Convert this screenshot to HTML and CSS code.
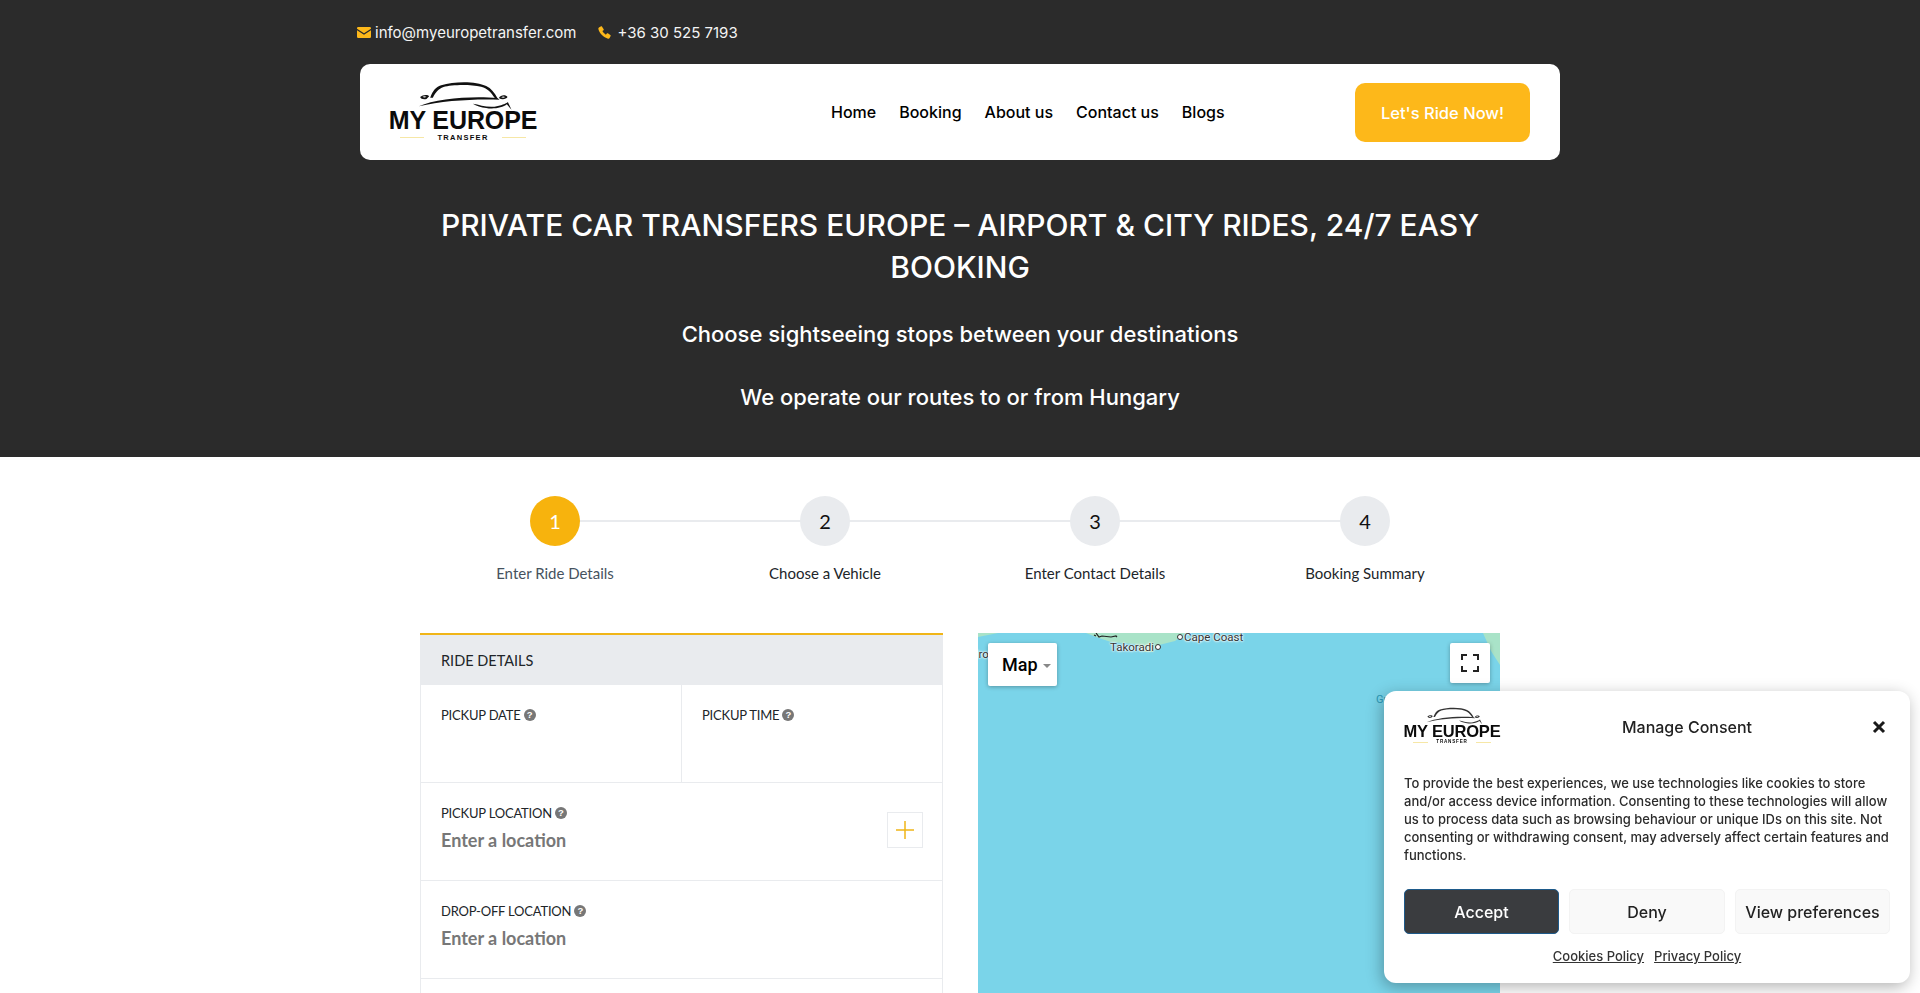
FILE: index.html
```html
<!DOCTYPE html>
<html lang="en">
<head>
<meta charset="utf-8">
<title>My Europe Transfer</title>
<link rel="stylesheet" href="styles.css">
</head>
<body>
<svg class="defs" width="0" height="0" aria-hidden="true">
  <symbol id="car" viewBox="110 20 290 90">
    <path d="M152 70C160 50 168 38 185 33C225 20 290 20 320 35C335 42 345 55 354 72L346 71C335 55 325 42 305 37C270 29 215 31 192 38C177 43 168 55 160 70Z"/>
    <path d="M118 96C170 72 280 64 354 71L360 76C290 73 190 78 118 96Z"/>
    <path d="M122 68C130 60 146 60 149 66L141 74C132 76 124 74 122 68ZM129 67C133 70 137 70 141 67C137 65 132 65 129 67Z" fill-rule="evenodd"/>
    <path d="M358 71C364 60 380 61 384 68C380 75 367 77 358 71ZM365 69C369 71 374 71 377 68C373 65 368 66 365 69Z" fill-rule="evenodd"/>
    <path d="M280 88C300 91 322 100 345 97C364 94 380 88 385 83L396 106L382 90C370 101 340 105 320 101C305 99 290 95 280 88Z"/>
  </symbol>
</svg>

<header class="hero">
  <div class="contact">
    <a class="contact-item">
      <svg class="ico-mail" viewBox="0 0 14 11"><path d="M1.2 0h11.6A1.2 1.2 0 0 1 14 1.2v.5L7 6.2 0 1.700v-.5A1.200 1.200 0 0 1 1.200 0Z"/><path d="M0 3.300 7 7.800l7-4.500v6.500a1.200 1.200 0 0 1-1.200 1.200H1.200A1.200 1.200 0 0 1 0 9.800Z"/></svg>
      info@myeuropetransfer.com
    </a>
    <a class="contact-item contact-phone">
      <svg class="ico-phone" viewBox="0 0 14 14"><path d="M3.300.4 1 1.500C.4 1.900.2 2.500.4 3.200 1.600 8 6 12.400 10.800 13.600c.7.200 1.300 0 1.700-.6l1.100-2.300c.2-.4.100-.8-.3-1.100l-2.700-1.700c-.4-.2-.8-.2-1.100.1L8.500 9.300C6.900 8.500 5.500 7.100 4.700 5.500l1.300-1c.3-.3.3-.7.100-1.100L4.400.7C4.100.3 3.700.2 3.300.4Z"/></svg>
      +36 30 525 7193
    </a>
  </div>

  <nav class="navbar">
    <div class="logo logo-lg">
      <svg class="logo-car"><use href="#car"/></svg>
      <div class="logo-name">MY EUROPE</div>
      <div class="logo-sub"><i></i><span>TRANSFER</span><i></i></div>
    </div>
    <ul class="menu">
      <li>Home</li>
      <li>Booking</li>
      <li>About us</li>
      <li>Contact us</li>
      <li>Blogs</li>
    </ul>
    <a class="cta">Let's Ride Now!</a>
  </nav>

  <h1 class="title">PRIVATE CAR TRANSFERS EUROPE – AIRPORT &amp; CITY RIDES, 24/7 EASY BOOKING</h1>
  <p class="tagline">Choose sightseeing stops between your destinations</p>
  <p class="tagline tagline-second">We operate our routes to or from Hungary</p>
</header>

<main class="content">
  <ol class="steps">
    <li class="step step-active"><span class="step-num">1</span><span class="step-label">Enter Ride Details</span></li>
    <li class="step"><span class="step-num">2</span><span class="step-label">Choose a Vehicle</span></li>
    <li class="step"><span class="step-num">3</span><span class="step-label">Enter Contact Details</span></li>
    <li class="step step-last"><span class="step-num">4</span><span class="step-label">Booking Summary</span></li>
  </ol>

  <section class="booking">
    <form class="panel">
      <div class="panel-head">RIDE DETAILS</div>
      <div class="row row-split">
        <div class="field field-left"><label class="field-label">PICKUP DATE <b class="help">?</b></label></div>
        <div class="field"><label class="field-label">PICKUP TIME <b class="help">?</b></label></div>
      </div>
      <div class="row field field-add">
        <div>
          <label class="field-label">PICKUP LOCATION <b class="help">?</b></label>
          <div class="placeholder">Enter a location</div>
        </div>
        <span class="add-btn"><svg viewBox="0 0 18 18"><path d="M9 0v18M0 9h18"/></svg></span>
      </div>
      <div class="row field">
        <label class="field-label">DROP-OFF LOCATION <b class="help">?</b></label>
        <div class="placeholder">Enter a location</div>
      </div>
      <div class="row row-empty"></div>
    </form>

    <div class="map">
      <svg class="map-land" viewBox="0 0 522 60" preserveAspectRatio="none">
        <path class="land" d="M0 0H20L0 4ZM108 0L118 4L133 9L157 11L166 19L175 19L181 12L197 8L207 0ZM505 0H522V32L513 18Z"/>
        <path class="road" d="M118 0l3 4 3-1 9 1 5-1 1 1M116 2l2 1"/>
      </svg>
      <span class="place place-takoradi">Takoradi<i></i></span>
      <span class="place place-cape"><i></i>Cape Coast</span>
      <span class="place place-dr">dro</span>
      <span class="place place-gr">Gr</span>
      <button class="map-type" type="button">Map<i></i></button>
      <button class="map-full" type="button" aria-label="Fullscreen">
        <svg viewBox="0 0 18 18"><path d="M0 6V0h6V2H2v4ZM12 0h6v6h-2V2h-4ZM0 12h2v4h4v2H0ZM16 12h2v6h-6v-2h4Z"/></svg>
      </button>
    </div>
  </section>
</main>

<aside class="consent">
  <div class="consent-head">
    <div class="logo logo-sm">
      <svg class="logo-car"><use href="#car"/></svg>
      <div class="logo-name">MY EUROPE</div>
      <div class="logo-sub"><i></i><span>TRANSFER</span><i></i></div>
    </div>
    <div class="consent-title">Manage Consent</div>
    <svg class="consent-close" viewBox="0 0 14 14"><path d="M2 2l10 10M12 2L2 12"/></svg>
  </div>
  <p class="consent-text">To provide the best experiences, we use technologies like cookies to store and/or access device information. Consenting to these technologies will allow us to process data such as browsing behaviour or unique IDs on this site. Not consenting or withdrawing consent, may adversely affect certain features and functions.</p>
  <div class="consent-actions">
    <button class="btn btn-accept" type="button">Accept</button>
    <button class="btn" type="button">Deny</button>
    <button class="btn" type="button">View preferences</button>
  </div>
  <div class="consent-links"><a>Cookies Policy</a><a>Privacy Policy</a></div>
</aside>
</body>
</html>
```
FILE: styles.css
```css
* { box-sizing: border-box; }
html, body { height: 100%; overflow: hidden; }
body { margin: 0; background: #fff; color: #212529; font-family: "Inter", "Liberation Sans", sans-serif; }
.defs { position: absolute; }
ul, ol { list-style: none; margin: 0; padding: 0; }

/* hero */
.hero { background: #2b2b2b; height: 457px; color: #fff; text-align: center; }
.contact { height: 64px; padding: 0 0 0 357px; display: flex; align-items: center; gap: 22px; font-size: 15px; }
.contact-item { display: flex; align-items: center; gap: 4px; color: #f4f4f4; }
.contact-phone { gap: 6px; }
.ico-mail { width: 14px; height: 11px; fill: #fdb81a; }
.ico-phone { width: 13px; height: 13px; fill: #fdb81a; }

.navbar { height: 96px; margin: 0 360px; background: #fff; border-radius: 10px; display: flex; align-items: center; padding: 0 30px; color: #000; }
.logo { display: flex; flex-direction: column; align-items: center; color: #0b0b0b; }
.logo-car { display: block; fill: #111; }
.logo-name { font-family: "Liberation Sans", Arial, sans-serif; font-weight: 700; white-space: nowrap; }
.logo-sub { display: flex; align-items: center; font-family: "Liberation Sans", Arial, sans-serif; font-weight: 700; }
.logo-sub i { display: block; background: #f6e7a6; }
.logo-lg { width: 146px; }
.logo-lg .logo-car { width: 97px; height: 30px; margin: 0 0 0 2px; }
.logo-lg .logo-name { font-size: 25px; line-height: 21px; margin-top: -1px; letter-spacing: -.1px; }
.logo-lg .logo-sub { font-size: 7.500px; letter-spacing: 1.300px; line-height: 12px; gap: 13px; margin-top: 1px; }
.logo-lg .logo-sub i { width: 24px; height: 1.500px; }

.menu { display: flex; gap: 23px; margin-left: 295px; font-size: 16px; font-weight: 500; }
.cta { margin-left: auto; width: 175px; height: 59px; border-radius: 10px; background: #fdb81a; color: #fff; font-size: 16.500px; font-weight: 500; display: flex; align-items: center; justify-content: center; padding-top: 1px; }

.title { margin: 44px auto 0; width: 1040px; font-size: 30px; line-height: 42px; font-weight: 500; }
.tagline { margin: 30px 0 0; font-size: 22px; line-height: 33px; font-weight: 500; }
.tagline-second { margin-top: 30px; }

/* stepper */
.content { width: 1080px; margin: 0 auto; }
.steps { display: grid; grid-template-columns: repeat(4, 270px); padding-top: 39px; }
.step { position: relative; display: flex; flex-direction: column; align-items: center; font-family: "Lato", sans-serif; }
.step::after { content: ""; position: absolute; left: 50%; width: 100%; top: 24px; height: 2px; background: #e9ebee; }
.step-last::after { display: none; }
.step-num { position: relative; z-index: 1; width: 50px; height: 50px; border-radius: 50%; background: #e9ebee; color: #111; font-size: 20px; display: flex; align-items: center; justify-content: center; }
.step-active .step-num { background: #f7b30d; color: #fff; }
.step-label { margin-top: 15px; font-size: 15px; line-height: 24px; color: #212529; }
.step-active .step-label { color: #46525e; }

/* booking */
.booking { display: grid; grid-template-columns: 523px 522px; column-gap: 35px; margin-top: 48px; }
.panel { border-top: 2px solid #f0b518; font-family: "Lato", sans-serif; height: 500px; }
.panel-head { height: 50px; background: #e9ebee; padding: 0 21px; display: flex; align-items: center; font-size: 14.500px; color: #212529; }
.row { border: 1px solid #e9ebee; border-top: 0; height: 98px; }
.row-split { display: grid; grid-template-columns: 261px 1fr; }
.row-empty { height: 200px; }
.field { padding: 21px 20px 0; }
.row.field { padding-left: 20px; }
.field-left { border-right: 1px solid #e9ebee; }
.field-add { display: flex; justify-content: space-between; }
.field-label { display: flex; align-items: center; gap: 3px; font-size: 13px; line-height: 18px; letter-spacing: -.2px; color: #212529; }
.help { width: 12px; height: 12px; border-radius: 50%; background: #777; color: #fff; font: 700 9.500px/12px "Liberation Sans", sans-serif; text-align: center; letter-spacing: 0; }
.placeholder { margin-top: 5px; font-size: 18px; line-height: 26px; font-weight: 700; color: #777; }
.add-btn { width: 36px; height: 36px; margin-top: 8px; margin-right: -1px; border: 1px solid #e9ebee; display: flex; align-items: center; justify-content: center; }
.add-btn svg { width: 18px; height: 18px; fill: none; stroke: #f0b518; stroke-width: 1.500; }

/* map */
.map { position: relative; height: 560px; background: #7ad4e9; overflow: hidden; font-family: "Roboto", sans-serif; }
.map-land { position: absolute; left: 0; top: 0; width: 522px; height: 60px; }
.land { fill: #a9e3c8; }
.road { fill: none; stroke: #222; stroke-width: 1.200; }
.place { position: absolute; display: flex; align-items: center; gap: 1px; font-size: 11.500px; line-height: 14px; color: #333; text-shadow: 0 0 2px #fff, 0 0 2px #fff, 0 0 3px #fff; white-space: nowrap; }
.place i { width: 6px; height: 6px; border: 1px solid #333; border-radius: 50%; background: #fff; }
.place-takoradi { left: 132px; top: 7px; }
.place-cape { left: 199px; top: -3px; }
.place-dr { left: -6px; top: 14px; }
.place-gr { left: 398px; top: 60px; color: #2b98b6; text-shadow: none; font-size: 11px; }
.map-type { position: absolute; left: 10px; top: 10px; width: 69px; height: 43px; border: 0; border-radius: 2px; background: #fff; box-shadow: 0 1px 4px rgba(0,0,0,.3); font: 500 18px "Roboto", sans-serif; color: #000; display: flex; align-items: center; padding: 0 0 0 14px; }
.map-type i { margin: 2px 0 0 5px; border: 4px solid transparent; border-top-color: #888; border-bottom: 0; }
.map-full { position: absolute; right: 10px; top: 10px; width: 40px; height: 40px; border: 0; border-radius: 2px; background: #fff; box-shadow: 0 1px 4px rgba(0,0,0,.3); padding: 0; display: flex; align-items: center; justify-content: center; }
.map-full svg { width: 18px; height: 18px; fill: #222; }

/* consent */
.consent { position: fixed; left: 1384px; top: 691px; width: 526px; height: 292px; background: #fff; border-radius: 12px; box-shadow: -2px 4px 16px rgba(0,0,0,.3); padding: 16px 20px 0; color: #222; }
.consent-head { display: grid; grid-template-columns: 96px 1fr 14px; align-items: center; height: 38px; }
.logo-sm .logo-car { width: 58px; height: 18px; margin-left: 3px; fill: #333; }
.logo-sm .logo-name { font-size: 16.500px; line-height: 14px; margin-top: -1px; letter-spacing: -.2px; }
.logo-sm .logo-sub { font-size: 4.600px; line-height: 8px; letter-spacing: .8px; gap: 8px; }
.logo-sm .logo-sub i { width: 15px; height: 1px; }
.consent-title { text-align: center; font-size: 16px; font-weight: 500; padding-left: 0; padding-right: 2px; }
.consent-close { width: 14px; height: 14px; stroke: #1a1a1a; stroke-width: 3; fill: none; margin-left: -4px; }
.consent-text { margin: 29px 0 0; font-size: 13px; line-height: 18px; font-weight: 500; width: 486px; color: #2b2b2b; }
.consent-actions { display: grid; grid-template-columns: 155px 156px 155px; column-gap: 10px; margin-top: 25px; }
.btn { height: 45px; border: 1px solid #f3f3f3; border-radius: 5px; background: #f9f9f9; color: #222; font: 500 16px "Inter", sans-serif; padding: 0; white-space: nowrap; }
.btn-accept { background: #3a3c3f; border-color: #1e5a8a; color: #fff; }
.consent-links { display: flex; justify-content: center; gap: 10px; margin-top: 13px; font-size: 13px; line-height: 18px; font-weight: 500; color: #333; }
.consent-links a { text-decoration: underline; }
```
